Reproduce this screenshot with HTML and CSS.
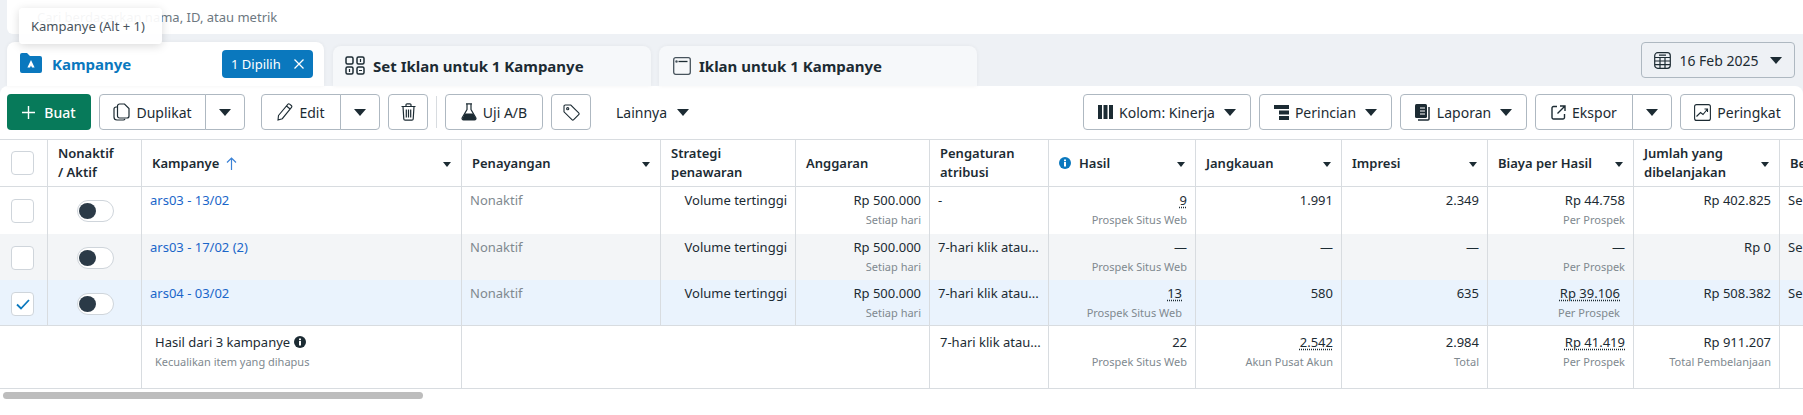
FILE: index.html
```html
<!DOCTYPE html>
<html lang="id">
<head>
    <meta charset="UTF-8">
    <title>Kampanye</title>
    <link rel="stylesheet" href="styles.css">
</head>
<body>
    <div class="search">Cari berdasarkan nama, ID, atau metrik</div>
    <div class="tooltip">Kampanye (Alt + 1)</div>

    <div class="tabs">
        <div class="tab tab-active">
            <svg class="tab-icon-main" width="22" height="20" viewBox="0 0 22 20"><path d="M0 2a2 2 0 0 1 2-2h5l3 3h10a2 2 0 0 1 2 2v13a2 2 0 0 1-2 2H2a2 2 0 0 1-2-2z" fill="#0a78be"/><path d="M11 7l3.6 7.5H12L11 12.500 10 14.500H7.400z" fill="#fff"/></svg>
            <span class="tab-title">Kampanye</span>
            <span class="badge">1 Dipilih
                <svg width="10" height="10" viewBox="0 0 10 10"><path d="M.5.5l9 9M9.500.5l-9 9" stroke="#fff" stroke-width="1.300"/></svg>
            </span>
        </div>
        <div class="tab tab-sets">
            <svg width="20" height="19" viewBox="0 0 20 19" fill="none" stroke="#1c2b33" stroke-width="1.500"><rect x="1" y="1" width="7" height="7" rx="1.500"/><rect x="12" y="1" width="7" height="7" rx="1.500"/><rect x="1" y="11" width="7" height="7" rx="1.500"/><rect x="12" y="11" width="7" height="7" rx="1.500"/><path d="M15.500 3v3M4.500 13v3M14 14.500h3" stroke-width="1.200"/></svg>
            <span class="tab-label">Set Iklan untuk 1 Kampanye</span>
        </div>
        <div class="tab tab-ads">
            <svg width="18" height="18" viewBox="0 0 18 18" fill="none" stroke="#47535c" stroke-width="1.300"><rect x=".7" y=".7" width="16.600" height="16.600" rx="2"/><path d="M5.500 4.500h9" stroke="#1c2b33"/><circle cx="3.500" cy="4.500" r=".6" fill="#1c2b33"/></svg>
            <span class="tab-label">Iklan untuk 1 Kampanye</span>
        </div>
        <button class="btn btn-date">
            <svg width="17" height="17" viewBox="0 0 17 17" fill="none" stroke="#1c2b33" stroke-width="1.200"><rect x=".7" y=".7" width="15.600" height="15.600" rx="3"/><path d="M1 5.500h15M1 9h15M1 12.700h15M6 5.500v11M11 5.500v11M5 3.200h7"/></svg>
            16 Feb 2025 <i class="caret"></i>
        </button>
    </div>

    <div class="panel">
        <div class="toolbar">
            <button class="btn btn-create">
                <svg width="13" height="13" viewBox="0 0 13 13"><path d="M6.500 0v13M0 6.500h13" stroke="#fff" stroke-width="1.400"/></svg>
                Buat
            </button>
            <div class="split w-dup">
                <button class="btn btn-main">
                    <svg width="17" height="18" viewBox="0 0 17 18" fill="none" stroke="#1c2b33" stroke-width="1.200"><path d="M4.500 4H3a2 2 0 0 0-2 2v8a3 3 0 0 0 3 3h6a2 2 0 0 0 2-1"/><path d="M4.500 3a2 2 0 0 1 2-2h5l4.500 4.500V13a2 2 0 0 1-2 2h-7.500a2 2 0 0 1-2-2z"/></svg>
                    Duplikat
                </button>
                <button class="btn btn-more"><i class="caret"></i></button>
            </div>
            <div class="split w-edit">
                <button class="btn btn-main">
                    <svg width="16" height="18" viewBox="0 0 16 18" fill="none" stroke="#1c2b33" stroke-width="1.100"><path d="M1.500 12.500L10.800 1.300a1.300 1.300 0 0 1 1.800-.2l1.700 1.400a1.300 1.300 0 0 1 .2 1.800L5.300 15.700 1 17zM9.500 3l3.600 3"/></svg>
                    Edit
                </button>
                <button class="btn btn-more"><i class="caret"></i></button>
            </div>
            <button class="btn btn-icon w-trash">
                <svg width="15" height="18" viewBox="0 0 15 18" fill="none" stroke="#1c2b33" stroke-width="1.200"><path d="M.5 3.500h14M5 3V1.800A1 1 0 0 1 6 .8h3a1 1 0 0 1 1 1V3M2 3.500l.8 12.500a1.300 1.300 0 0 0 1.300 1.200h6.800a1.300 1.300 0 0 0 1.300-1.200L13 3.500M5.300 6.500v8M7.500 6.500v8M9.700 6.500v8"/></svg>
            </button>
            <span class="divider"></span>
            <button class="btn w-ab">
                <svg width="16" height="18" viewBox="0 0 16 18"><path d="M5 .8h6M6 1v5.500L1.200 14.800A1.500 1.500 0 0 0 2.500 17h11a1.500 1.500 0 0 0 1.300-2.200L10 6.500V1" fill="none" stroke="#1c2b33" stroke-width="1.200"/><path d="M3.800 10.500h8.400l3 5.500-1 1H2l-.8-1z" fill="#1c2b33"/></svg>
                Uji A/B
            </button>
            <button class="btn btn-icon w-tag">
                <svg width="17" height="17" viewBox="0 0 17 17" fill="none" stroke="#1c2b33" stroke-width="1.100"><path d="M1 2.200A1.200 1.200 0 0 1 2.200 1h5.600l7.900 7.900a1.300 1.300 0 0 1 0 1.800l-5 5a1.300 1.300 0 0 1-1.800 0L1 7.800z"/><circle cx="4.700" cy="4.700" r="1.100"/></svg>
            </button>
            <div class="more-link">Lainnya <i class="caret"></i></div>

            <div class="toolbar-right">
                <button class="btn w-kolom">
                    <svg width="15" height="14" viewBox="0 0 15 14" fill="#1c2b33"><rect width="4" height="14"/><rect x="5.500" width="4" height="14"/><rect x="11" width="4" height="14"/></svg>
                    Kolom: Kinerja <i class="caret"></i>
                </button>
                <button class="btn w-rincian">
                    <svg width="15" height="15" viewBox="0 0 15 15" fill="#1c2b33"><rect width="15" height="4"/><rect x="5" y="5.500" width="10" height="4"/><rect x="5" y="11" width="10" height="4"/></svg>
                    Perincian <i class="caret"></i>
                </button>
                <button class="btn w-laporan">
                    <svg width="16" height="17" viewBox="0 0 16 17"><rect x="0" y="0" width="12" height="14" rx="1.500" fill="#1c2b33"/><path d="M5 4h5M5 7h5M5 10h5" stroke="#fff" stroke-width="1.200"/><path d="M14 3v12a1 1 0 0 1-1 1H3" fill="none" stroke="#1c2b33" stroke-width="1.500"/></svg>
                    Laporan <i class="caret"></i>
                </button>
                <div class="split w-ekspor">
                    <button class="btn btn-main">
                        <svg width="15" height="15" viewBox="0 0 15 15" fill="none" stroke="#1c2b33" stroke-width="1.400"><path d="M6 1.500H2.500a1.500 1.500 0 0 0-1.500 1.500v9.500A1.500 1.500 0 0 0 2.500 14H12a1.500 1.500 0 0 0 1.500-1.500V9M9 1h5v5M14 1L6.500 8.500"/></svg>
                        Ekspor
                    </button>
                    <button class="btn btn-more"><i class="caret"></i></button>
                </div>
                <button class="btn w-rank">
                    <svg width="17" height="17" viewBox="0 0 17 17" fill="none" stroke="#1c2b33" stroke-width="1.100"><rect x=".6" y=".6" width="15.800" height="15.800" rx="2"/><path d="M2.500 12.500l4-4 2.500 2 4.500-5.500M10.500 5h3v3"/></svg>
                    Peringkat
                </button>
            </div>
        </div>

        <div class="table-wrap">
            <table class="grid">
                <colgroup>
                    <col class="c-check"><col class="c-toggle"><col class="c-name"><col class="c-delivery">
                    <col class="c-bid"><col class="c-budget"><col class="c-attr"><col class="c-result">
                    <col class="c-metric"><col class="c-metric"><col class="c-metric"><col class="c-metric"><col class="c-last">
                </colgroup>
                <thead>
                    <tr>
                        <th><span class="check"></span></th>
                        <th>Nonaktif<br>/ Aktif</th>
                        <th><div class="th-in"><span>Kampanye <svg class="sort" width="11" height="13" viewBox="0 0 11 13" fill="none" stroke="#3b82d6" stroke-width="1.200"><path d="M5.500 13V1M1 5.500L5.500 1 10 5.500"/></svg></span><i class="caret-s"></i></div></th>
                        <th><div class="th-in"><span>Penayangan</span><i class="caret-s"></i></div></th>
                        <th>Strategi<br>penawaran</th>
                        <th>Anggaran</th>
                        <th>Pengaturan<br>atribusi</th>
                        <th><div class="th-in"><span class="th-info"><svg width="12" height="12" viewBox="0 0 12 12"><circle cx="6" cy="6" r="6" fill="#0a78be"/><rect x="5" y="5" width="2" height="4.500" fill="#fff"/><rect x="5" y="2.500" width="2" height="1.700" fill="#fff"/></svg>Hasil</span><i class="caret-s"></i></div></th>
                        <th><div class="th-in"><span>Jangkauan</span><i class="caret-s"></i></div></th>
                        <th><div class="th-in"><span>Impresi</span><i class="caret-s"></i></div></th>
                        <th><div class="th-in"><span>Biaya per Hasil</span><i class="caret-s"></i></div></th>
                        <th><div class="th-in"><span>Jumlah yang<br>dibelanjakan</span><i class="caret-s"></i></div></th>
                        <th>Be</th>
                    </tr>
                </thead>
                <tbody>
                    <tr class="row row-first">
                        <td><span class="check"></span></td>
                        <td><span class="toggle"></span></td>
                        <td><a class="name">ars03 - 13/02</a></td>
                        <td class="muted">Nonaktif</td>
                        <td class="num">Volume tertinggi</td>
                        <td class="num">Rp 500.000<small>Setiap hari</small></td>
                        <td>-</td>
                        <td class="num"><span class="dots">9</span><small>Prospek Situs Web</small></td>
                        <td class="num">1.991</td>
                        <td class="num">2.349</td>
                        <td class="num">Rp 44.758<small>Per Prospek</small></td>
                        <td class="num">Rp 402.825</td>
                        <td>Se</td>
                    </tr>
                    <tr class="row row-grey">
                        <td><span class="check"></span></td>
                        <td><span class="toggle"></span></td>
                        <td><a class="name">ars03 - 17/02 (2)</a></td>
                        <td class="muted">Nonaktif</td>
                        <td class="num">Volume tertinggi</td>
                        <td class="num">Rp 500.000<small>Setiap hari</small></td>
                        <td>7-hari klik atau...</td>
                        <td class="num">—<small>Prospek Situs Web</small></td>
                        <td class="num">—</td>
                        <td class="num">—</td>
                        <td class="num">—<small>Per Prospek</small></td>
                        <td class="num">Rp 0</td>
                        <td>Se</td>
                    </tr>
                    <tr class="row row-selected">
                        <td><span class="check check-on"><svg width="14" height="11" viewBox="0 0 14 11" fill="none" stroke="#0a78be" stroke-width="1.800"><path d="M1 5.500l4 4L13 1"/></svg></span></td>
                        <td><span class="toggle"></span></td>
                        <td><a class="name">ars04 - 03/02</a></td>
                        <td class="muted">Nonaktif</td>
                        <td class="num">Volume tertinggi</td>
                        <td class="num">Rp 500.000<small>Setiap hari</small></td>
                        <td>7-hari klik atau...</td>
                        <td class="num inset"><span class="dots">13</span><small>Prospek Situs Web</small></td>
                        <td class="num">580</td>
                        <td class="num">635</td>
                        <td class="num inset"><span class="dots">Rp 39.106</span><small>Per Prospek</small></td>
                        <td class="num">Rp 508.382</td>
                        <td>Se</td>
                    </tr>
                    <tr class="summary">
                        <td colspan="2" class="blank"></td>
                        <td class="sum-cell"><div class="sum-title">Hasil dari 3 kampanye <svg width="12" height="12" viewBox="0 0 12 12"><circle cx="6" cy="6" r="6" fill="#1c2b33"/><rect x="5" y="5" width="2" height="4.500" fill="#fff"/><rect x="5" y="2.500" width="2" height="1.700" fill="#fff"/></svg></div><small>Kecualikan item yang dihapus</small></td>
                        <td colspan="3"></td>
                        <td>7-hari klik atau...</td>
                        <td class="num">22<small>Prospek Situs Web</small></td>
                        <td class="num"><span class="dots">2.542</span><small>Akun Pusat Akun</small></td>
                        <td class="num">2.984<small>Total</small></td>
                        <td class="num"><span class="dots">Rp 41.419</span><small>Per Prospek</small></td>
                        <td class="num">Rp 911.207<small>Total Pembelanjaan</small></td>
                        <td></td>
                    </tr>
                </tbody>
            </table>
        </div>
        <div class="scrollbar"><div class="thumb"></div></div>
    </div>
</body>
</html>
```

FILE: styles.css
```css
* {
    box-sizing: border-box;
}
html, body {
    height: 100%;
}
body {
    margin: 0;
    background-color: #eef1f5;
    color: #1c2b33;
    font-family: "Noto Sans", "Open Sans", sans-serif;
    font-size: 13px;
    overflow: hidden;
}
.search {
    height: 34px;
    margin-left: 7px;
    padding: 8px 30px;
    background-color: #fff;
    border-radius: 0 0 0 6px;
    color: #6d7881;
    font-size: 13px;
    line-height: 18px;
}
.tooltip {
    position: absolute;
    top: 8px;
    left: 19px;
    width: 143px;
    height: 36px;
    padding: 9px 12px;
    background-color: rgba(255, 255, 255, 0.93);
    border-radius: 4px;
    box-shadow: 0 2px 10px rgba(0, 0, 0, 0.15);
    color: #47535c;
    line-height: 18px;
}

/* tabs */
.tabs {
    display: flex;
    align-items: flex-end;
    height: 52px;
    padding: 0 8px 0 7px;
}
.tab {
    display: flex;
    align-items: center;
    height: 40px;
    padding-bottom: 1px;
    background-color: #f6f8fa;
    border-radius: 8px 8px 0 0;
    box-shadow: 0 0 4px rgba(0, 0, 0, 0.05);
}
.tab-active {
    width: 317px;
    height: 44px;
    margin-right: 9px;
    padding: 0 11px 0 13px;
    background-color: #fff;
}
.tab-sets {
    width: 318px;
    margin-right: 8px;
    padding-left: 12px;
}
.tab-ads {
    width: 318px;
    padding-left: 14px;
}
.tab-icon-main {
    margin-top: -3px;
}
.tab-title {
    margin-left: 10px;
    color: #0a78be;
    font-size: 15px;
    font-weight: 700;
}
.tab-label {
    margin-left: 8px;
    font-size: 15px;
    font-weight: 700;
}
.badge {
    display: flex;
    align-items: center;
    justify-content: space-between;
    width: 91px;
    height: 28px;
    margin-left: auto;
    padding: 0 9px;
    background-color: #0a78be;
    border-radius: 4px;
    color: #fff;
    font-size: 13px;
}

/* buttons */
.btn {
    display: inline-flex;
    align-items: center;
    justify-content: center;
    gap: 6px;
    height: 36px;
    padding: 0;
    background-color: #fff;
    border: 1px solid #aeb8c1;
    border-radius: 4px;
    color: #1c2b33;
    font-family: inherit;
    font-size: 14px;
}
.caret {
    display: inline-block;
    width: 0;
    height: 0;
    margin-left: 3px;
    border-left: 6px solid transparent;
    border-right: 6px solid transparent;
    border-top: 7px solid #1c2b33;
}
.btn-date {
    width: 154px;
    align-self: flex-start;
    margin: 8px 0 0 auto;
    background-color: transparent;
    gap: 8px;
}
.btn-create {
    width: 84px;
    margin-right: 8px;
    background-color: #077a5a;
    border: none;
    color: #fff;
    font-weight: 500;
    gap: 9px;
}
.split {
    display: flex;
    margin-right: 8px;
}
.btn-main {
    flex: 1;
    border-radius: 4px 0 0 4px;
}
.btn-more {
    width: 40px;
    margin-left: -1px;
    border-radius: 0 4px 4px 0;
}
.btn-more .caret {
    margin: 0;
}
.w-dup {
    width: 146px;
    margin-right: 16px;
}
.w-edit {
    width: 119px;
}
.w-trash {
    width: 40px;
}
.divider {
    width: 1px;
    height: 32px;
    margin: 2px 8px 0;
    background-color: #d8dce0;
}
.w-ab {
    width: 98px;
    margin-right: 8px;
}
.w-tag {
    width: 40px;
}
.more-link {
    display: flex;
    align-items: center;
    align-self: stretch;
    gap: 7px;
    height: 36px;
    margin-left: 25px;
    font-size: 14px;
}

/* white panel */
.panel {
    height: calc(100% - 86px);
    background-color: #fff;
    border-radius: 8px 8px 0 0;
}
.toolbar {
    display: flex;
    align-items: flex-start;
    height: 53px;
    padding: 8px 8px 0 7px;
}
.toolbar-right {
    display: flex;
    gap: 8px;
    margin-left: auto;
}
.toolbar-right .split {
    margin: 0;
}
.w-kolom {
    width: 168px;
}
.w-rincian {
    width: 133px;
}
.w-laporan {
    width: 127px;
}
.w-ekspor {
    width: 137px;
}
.w-rank {
    width: 115px;
}

/* table */
.table-wrap {
    overflow: hidden;
}
.grid {
    width: 2000px;
    table-layout: fixed;
    border-collapse: separate;
    border-spacing: 0;
}
.c-check { width: 48px; }
.c-toggle { width: 94px; }
.c-name { width: 320px; }
.c-delivery { width: 199px; }
.c-bid { width: 135px; }
.c-budget { width: 134px; }
.c-attr { width: 119px; }
.c-result { width: 147px; }
.c-metric { width: 146px; }
.c-last { width: 220px; }
.grid th {
    height: 48px;
    padding: 0 10px;
    border-top: 1px solid #d8dce0;
    border-bottom: 1px solid #d8dce0;
    border-right: 1px solid #d8dce0;
    font-size: 13px;
    font-weight: 600;
    line-height: 19px;
    text-align: left;
    white-space: nowrap;
}
.grid td {
    padding: 4px 8px 0;
    border-right: 1px solid #d8dce0;
    line-height: 18px;
    vertical-align: top;
    white-space: nowrap;
}
.grid th:first-child, .grid td:first-child {
    padding: 0 0 0 11px;
}
.th-in {
    display: flex;
    align-items: center;
    justify-content: space-between;
}
.th-info {
    display: flex;
    align-items: center;
    gap: 8px;
}
.sort {
    margin-left: 3px;
    vertical-align: -2px;
}
.caret-s {
    flex: none;
    width: 0;
    height: 0;
    margin-top: 3px;
    border-left: 4px solid transparent;
    border-right: 4px solid transparent;
    border-top: 5px solid #1c2b33;
}
.row td {
    height: 46px;
}
.row-first td {
    height: 47px;
}
.row-grey td {
    background-color: #f3f5f7;
}
.row-selected td {
    background-color: #eaf3fd;
    border-bottom: 1px solid #d8dce0;
}
.summary td {
    height: 63px;
    padding: 7px 8px 0 10px;
    border-bottom: 1px solid #d8dce0;
}
.summary .sum-cell {
    padding-left: 13px;
}
.summary td:first-child {
    padding: 0;
    border-right: 1px solid #d8dce0;
}
.summary .num {
    padding-right: 8px;
}
.check {
    display: block;
    width: 23px;
    height: 24px;
    margin-top: 12px;
    background-color: #fff;
    border: 1px solid #cfd5db;
    border-radius: 4px;
}
th .check {
    margin-top: 0;
}
.check-on {
    display: flex;
    align-items: center;
    justify-content: center;
}
.toggle {
    position: relative;
    display: block;
    width: 37px;
    height: 22px;
    margin: 7px 0 0 20px;
    background-color: #fff;
    border: 1px solid #cfd5db;
    border-radius: 11px;
}
.toggle::before {
    content: "";
    position: absolute;
    top: 2px;
    left: 1px;
    width: 17px;
    height: 16px;
    background-color: #2b3a47;
    border-radius: 50%;
}
.row td:nth-child(2) {
    padding: 6px 0 0 9px;
}
.name {
    color: #1a66c9;
}
.muted {
    color: #80898f;
}
.num {
    text-align: right;
}
.grid small {
    display: block;
    margin-top: 3px;
    color: #80898f;
    font-size: 11px;
    line-height: 16px;
}
.dots {
    text-decoration: underline dotted;
    text-underline-offset: 2px;
}
.grid .inset {
    padding-right: 13px;
}
.sum-title {
    display: flex;
    align-items: center;
    gap: 4px;
    line-height: 18px;
}
.scrollbar {
    padding: 3px 0 0 3px;
}
.thumb {
    width: 420px;
    height: 7px;
    background-color: #bdbdbd;
    border-radius: 4px;
}
```
